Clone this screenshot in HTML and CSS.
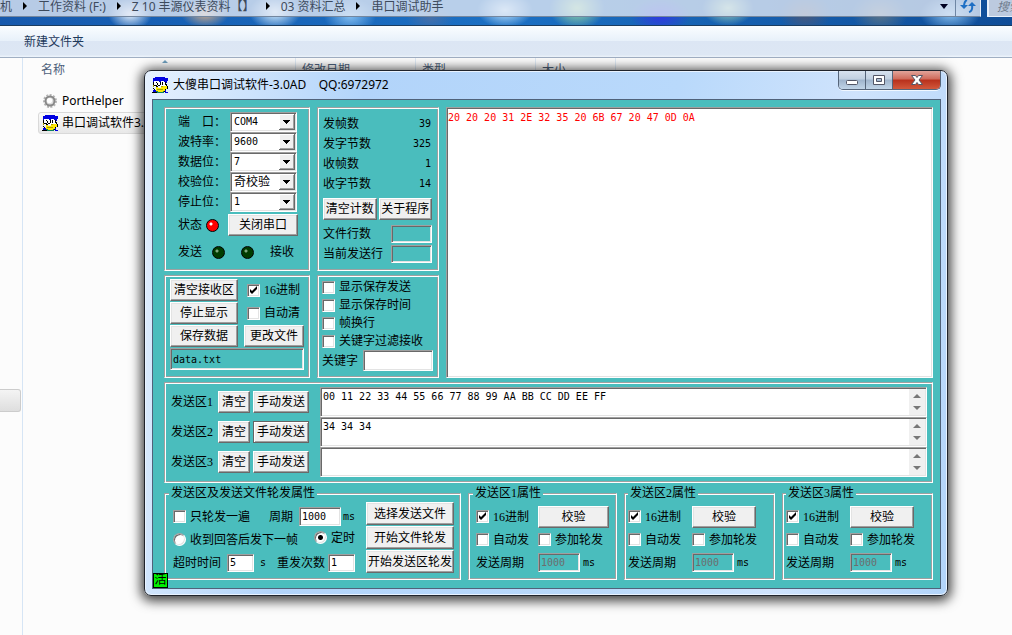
FILE: index.html
```html
<!DOCTYPE html>
<html lang="zh-CN">
<head>
<meta charset="utf-8">
<title>大傻串口调试软件</title>
<link rel="stylesheet" href="styles.css">
</head>
<body>
<svg class="defs" aria-hidden="true">
  <symbol id="clown" viewBox="0 0 16 16">
    <g shape-rendering="crispEdges">
    <path fill="#0000e0" d="M3 0h10v1h3v3h-1v2h-1v-1h-2v-1h-3v1h-2v-1h-5v1h-1v-4h2z"/>
    <path fill="#fff" d="M2 4h5v1h2v-1h3v1h2v5h-12z"/>
    <path fill="#000" d="M1 5h1v3h-1zM4 5h1v1h-1zM5 6h1v2h-1zM8 5h1v3h-1zM10 5h1v3h-1zM13 5h1v3h-1zM14 7h1v2h-1zM2 8h3v1h-3zM6 8h2v1h-2z"/>
    <path fill="#ffe800" d="M4 10h2v1h3v-1h2v-1h4v3h-2v2h-2v1h-5v-1h-2z"/>
    <path fill="#a8a000" d="M1 8h1v2h-1zM5 12h6v1h-6zM9 9h2v1h-2z"/>
    <path fill="#000" d="M1 11h1v1h1v1h1v1h-1v-1h-1v-1h-1zM4 9h2v1h-2zM15 9h1v3h-1zM13 12h1v1h-1zM0 15h5v1h-5zM12 14h1v1h-1z"/>
    <path fill="#0000e0" d="M1 13h3v2h-3zM13 13h1v2h2v1h-3z"/>
    <path fill="#108060" d="M4 14h2v1h5v-1h1v2h-7v-1h-1z"/>
    </g>
  </symbol>
  <symbol id="crumb" viewBox="0 0 4 8"><path d="M0 0l4 4-4 4z"/></symbol>
</svg>

<div class="explorer">
  <header class="address">
    <nav class="crumbs">
      <span>机</span><svg><use href="#crumb"/></svg>
      <span>工作资料 (F:)</span><svg><use href="#crumb"/></svg>
      <span>Z 10 丰源仪表资料【】</span><svg><use href="#crumb"/></svg>
      <span>03 资料汇总</span><svg><use href="#crumb"/></svg>
      <span>串口调试助手</span>
    </nav>
    <button class="history" aria-label="历史"><svg viewBox="0 0 8 5"><path fill="#002" d="M0 0h8l-4 5z"/></svg></button>
    <button class="refresh" aria-label="刷新"><svg viewBox="0 0 16 14"><path fill="none" stroke="#1f6fc4" stroke-width="2" d="M7 1Q4 2 4 8M9 13q4-1 3-7"/><path fill="#1f6fc4" d="M0 6h8l-4 4zM8 7h8l-4-4z"/></svg></button>
    <div class="search">搜索</div>
  </header>
  <div class="toolbar"><button>新建文件夹</button></div>
  <div class="body">
    <aside class="tree"><div class="thumb"></div></aside>
    <main class="files">
      <div class="columns"><span>名称<svg class="sort" viewBox="0 0 6 3"><path fill="#6f9fbe" d="M0 3l3-3 3 3z"/></svg></span><span>修改日期</span><span>类型</span><span>大小</span></div>
      <div class="file"><svg class="icon" viewBox="0 0 16 16"><circle cx="8" cy="8" r="6" fill="none" stroke="#b5b5b5" stroke-width="2" stroke-dasharray="2 1.400"/><circle cx="8" cy="8" r="4.500" fill="#ddd" stroke="#888" stroke-width="2"/><circle cx="7.500" cy="7.500" r="2.600" fill="#fff"/></svg>PortHelper</div>
      <div class="file selected"><svg class="icon"><use href="#clown"/></svg>串口调试软件3.</div>
    </main>
  </div>
</div>

<section class="window">
  <div class="titlebar">
    <svg class="icon"><use href="#clown"/></svg>
    <h1>大傻串口调试软件-3.0AD&nbsp;&nbsp;&nbsp; QQ:6972972</h1>
    <div class="controls">
      <button aria-label="最小化"><svg viewBox="0 0 14 12"><rect x="1.500" y="6.500" width="11" height="4" rx="1" fill="#fff" stroke="#535666"/></svg></button>
      <button aria-label="最大化"><svg viewBox="0 0 14 12"><path fill="#fff" stroke="#535666" fill-rule="evenodd" d="M1.500 1.500h11v9h-11zM4.500 4.500v3h5v-3z"/></svg></button>
      <button class="close" aria-label="关闭"><svg viewBox="0 0 14 12"><path fill="#fff" stroke="#535666" d="M1.500 1.500h4l1.500 2 1.500-2h4l-3.500 4.500 3.500 4.500h-4l-1.500-2-1.500 2h-4l3.500-4.500z"/></svg></button>
    </div>
  </div>

  <form class="client">
    <div class="upper">
      <div class="panel port">
        <div class="line"><label for="com">端<i></i>口：</label><span class="combo"><select id="com" class="mono"><option>COM4</option></select></span></div>
        <div class="line"><label for="baud">波特率：</label><span class="combo"><select id="baud" class="mono"><option>9600</option></select></span></div>
        <div class="line"><label for="bits">数据位：</label><span class="combo"><select id="bits" class="mono"><option>7</option></select></span></div>
        <div class="line"><label for="parity">校验位：</label><span class="combo"><select id="parity"><option>奇校验</option></select></span></div>
        <div class="line"><label for="stop">停止位：</label><span class="combo"><select id="stop" class="mono"><option>1</option></select></span></div>
        <div class="status"><span>状态</span><b class="led on"></b><button type="button">关闭串口</button></div>
        <div class="lamps"><span>发送</span><b class="led"></b><b class="led"></b><span>接收</span></div>
      </div>

      <div class="panel counts">
        <div class="count"><span>发帧数</span><output class="mono">39</output></div>
        <div class="count"><span>发字节数</span><output class="mono">325</output></div>
        <div class="count"><span>收帧数</span><output class="mono">1</output></div>
        <div class="count"><span>收字节数</span><output class="mono">14</output></div>
        <div class="pair"><button type="button">清空计数</button><button type="button">关于程序</button></div>
        <div class="count"><label for="lines">文件行数</label><input id="lines" class="teal" readonly></div>
        <div class="count"><label for="cur">当前发送行</label><input id="cur" class="teal" readonly></div>
      </div>

      <div class="panel receive">
        <button type="button">清空接收区</button><label class="tick"><input type="checkbox" checked>16进制</label>
        <button type="button">停止显示</button><label class="tick"><input type="checkbox">自动清</label>
        <button type="button">保存数据</button><button type="button">更改文件</button>
        <input class="teal mono wide" aria-label="文件名" value="data.txt" readonly>
      </div>

      <div class="panel display">
        <label class="tick"><input type="checkbox">显示保存发送</label>
        <label class="tick"><input type="checkbox">显示保存时间</label>
        <label class="tick"><input type="checkbox">帧换行</label>
        <label class="tick"><input type="checkbox">关键字过滤接收</label>
        <div class="keyword"><label for="key">关键字</label><input id="key"></div>
      </div>

      <textarea class="log mono" aria-label="接收区" readonly>20 20 20 31 2E 32 35 20 6B 67 20 47 0D 0A</textarea>
    </div>

    <div class="panel senders">
      <label for="s1">发送区1</label><button type="button">清空</button><button type="button">手动发送</button>
      <div class="memo"><textarea id="s1" class="mono">00 11 22 33 44 55 66 77 88 99 AA BB CC DD EE FF</textarea><svg viewBox="0 0 16 26"><path fill="#777" d="M4 9l4-4 4 4zM4 17h8l-4 4z"/></svg></div>
      <label for="s2">发送区2</label><button type="button">清空</button><button type="button" class="default">手动发送</button>
      <div class="memo"><textarea id="s2" class="mono">34 34 34</textarea><svg viewBox="0 0 16 26"><path fill="#777" d="M4 9l4-4 4 4zM4 17h8l-4 4z"/></svg></div>
      <label for="s3">发送区3</label><button type="button">清空</button><button type="button">手动发送</button>
      <div class="memo"><textarea id="s3" class="mono"></textarea><svg viewBox="0 0 16 26"><path fill="#777" d="M4 9l4-4 4 4zM4 17h8l-4 4z"/></svg></div>
    </div>

    <div class="lower">
      <fieldset class="cycle">
        <legend>发送区及发送文件轮发属性</legend>
        <div class="options">
          <div class="row first"><label class="tick"><input type="checkbox">只轮发一遍</label><label class="value">周期 <input class="mono medium" value="1000"><span class="mono">ms</span></label></div>
          <div class="row second"><label class="tick"><input type="radio" name="mode">收到回答后发下一帧</label><label class="tick"><input type="radio" name="mode" checked>定时</label></div>
          <div class="row third"><label class="value">超时时间<input class="mono short" value="5"><span class="mono">s</span></label><label class="value tight">重发次数<input class="mono short" value="1"></label></div>
        </div>
        <div class="stack"><button type="button">选择发送文件</button><button type="button">开始文件轮发</button><button type="button">开始发送区轮发</button></div>
      </fieldset>
      <fieldset class="zone roomy">
        <legend>发送区1属性</legend>
        <label class="tick"><input type="checkbox" checked>16进制</label><button type="button">校验</button>
        <label class="tick"><input type="checkbox">自动发</label><label class="tick"><input type="checkbox">参加轮发</label>
        <label for="z1">发送周期</label><span class="value"><input id="z1" class="mono medium" value="1000" disabled><span class="mono">ms</span></span>
      </fieldset>
      <fieldset class="zone">
        <legend>发送区2属性</legend>
        <label class="tick"><input type="checkbox" checked>16进制</label><button type="button">校验</button>
        <label class="tick"><input type="checkbox">自动发</label><label class="tick"><input type="checkbox">参加轮发</label>
        <label for="z2">发送周期</label><span class="value"><input id="z2" class="mono medium" value="1000" disabled><span class="mono">ms</span></span>
      </fieldset>
      <fieldset class="zone">
        <legend>发送区3属性</legend>
        <label class="tick"><input type="checkbox" checked>16进制</label><button type="button">校验</button>
        <label class="tick"><input type="checkbox">自动发</label><label class="tick"><input type="checkbox">参加轮发</label>
        <label for="z3">发送周期</label><span class="value"><input id="z3" class="mono medium" value="1000" disabled><span class="mono">ms</span></span>
      </fieldset>
    </div>
    <span class="badge">活</span>
  </form>
</section>
</body>
</html>
```
FILE: styles.css
```css
* { box-sizing: border-box; }
body {
  margin: 0;
  height: 100vh;
  overflow: hidden;
  background: #fcfcfc;
  color: #000;
  font: 12px/16px "Noto Sans", "Noto Sans CJK SC", sans-serif;
}
button, input, select, textarea { font: inherit; color: inherit; margin: 0; }
.defs { position: absolute; width: 0; height: 0; }
.icon { width: 16px; height: 16px; flex: none; }

/* Explorer behind the tool window */
.explorer { display: flex; flex-direction: column; height: 100vh; }
.address {
  display: flex;
  height: 26px;
  flex: none;
  padding-bottom: 8px;
  border-bottom: 1px solid #1a3c60;
  background:
    radial-gradient(ellipse 22px 16px at 130px 14px, #e8f2fc, transparent),
    radial-gradient(ellipse 24px 14px at 205px 14px, #c9a98c, transparent),
    radial-gradient(ellipse 26px 18px at 275px 12px, #dff2ff, transparent),
    radial-gradient(ellipse 26px 18px at 350px 16px, #82bdf0, transparent),
    radial-gradient(ellipse 24px 14px at 430px 18px, #466fa8, transparent),
    radial-gradient(ellipse 28px 18px at 505px 10px, #c8e8ff, transparent),
    radial-gradient(ellipse 28px 22px at 577px 8px, #a5e0a0, transparent),
    radial-gradient(ellipse 30px 18px at 660px 16px, #3038e0, transparent),
    radial-gradient(ellipse 26px 18px at 728px 8px, #a8d8b8, transparent),
    radial-gradient(ellipse 26px 20px at 805px 14px, #4b5878, transparent),
    radial-gradient(ellipse 28px 20px at 880px 14px, #5b7488, transparent),
    radial-gradient(ellipse 30px 18px at 950px 14px, #86bdec, transparent),
    linear-gradient(90deg, #1659ad, #1b70c4 50%, #0f4d98);
}
.crumbs {
  flex: 1;
  display: flex;
  align-items: flex-start;
  gap: 11px;
  min-width: 0;
  white-space: nowrap;
  color: #3d4a5c;
  background: rgba(224, 231, 244, 0.8);
  border-bottom: 1px solid #74879f;
  line-height: 13px;
}
.crumbs svg { width: 4px; height: 8px; margin-top: 2px; flex: none; }
.address button {
  border: 0;
  border-bottom: 1px solid #74879f;
  padding: 0;
  display: flex;
  align-items: center;
  justify-content: center;
  background: rgba(224, 231, 244, 0.8);
}
.address .history { width: 22px; padding-bottom: 4px; }
.history svg { width: 8px; height: 5px; }
.address .refresh { width: 26px; border-left: 1px solid #6f86a4; border-right: 1px solid #e8f0fa; padding-bottom: 4px; }
.refresh svg { width: 16px; height: 14px; }
.search {
  width: 25px;
  margin-left: 6px;
  padding-left: 8px;
  overflow: hidden;
  white-space: nowrap;
  font-style: italic;
  color: #707d8e;
  background: #bccadf;
  border-left: 2px solid #e8f0fa;
  border-bottom: 1px solid #e8f0fa;
  line-height: 14px;
}
.toolbar {
  flex: none;
  display: flex;
  align-items: center;
  height: 32px;
  padding-left: 24px;
  background: linear-gradient(#fafdff, #e8f1fa 47%, #dce6f4 48%, #dde7f4 92%, #eef5fc);
  border-bottom: 1px solid #a0afc3;
}
.toolbar button { border: 0; padding: 0; background: none; color: #1e395b; }
.body { flex: 1; display: flex; min-height: 0; }
.tree { width: 23px; border-right: 1px solid #d6e5f5; padding-top: 331px; }
.thumb { height: 23px; width: 21px; border: 1px solid #ccc; border-left: 0; border-radius: 0 3px 3px 0; background: linear-gradient(#f4f4f4, #dedede); }
.files { flex: 1; padding-left: 15px; }
.columns { display: flex; height: 32px; color: #4c607a; line-height: 24px; }
.columns span { width: 120px; padding-left: 6px; border-right: 1px solid #dfeaf5; height: 24px; }
.columns span:first-child { display: flex; width: 258px; padding-left: 3px; }
.columns span:last-child { width: 80px; }
.sort { width: 6px; height: 3px; margin-left: 97px; margin-top: 2px; }
.file { display: flex; align-items: center; gap: 4px; height: 22px; width: 240px; padding-left: 3px; border: 1px solid transparent; border-radius: 3px; }
.selected { background: linear-gradient(#fafafa, #e8e8e8); border-color: #d9d9d9; }

/* Tool window */
.window {
  position: absolute;
  left: 144px;
  right: 64px;
  top: 70px;
  padding: 0 6px 6px 7px;
  border: 1px solid #20242c;
  border-radius: 7px;
  background: linear-gradient(100deg, #e6f1fe, #b2d4fa 25%, #b9d9fb 60%, #cfe3fc 80%, #b2d4fa);
  box-shadow: inset 0 0 0 1px #e9f3ff, 0 2px 12px 3px rgba(0, 0, 0, 0.75);
}
.titlebar { display: flex; align-items: center; height: 28px; }
.titlebar h1 { flex: 1; margin: 0 0 0 5px; font-size: 12px; font-weight: 400; white-space: nowrap; }
.controls { display: flex; align-self: flex-start; height: 19px; border: 1px solid #56657a; border-top: 0; border-radius: 0 0 5px 5px; overflow: hidden; box-shadow: 0 1px #f0f7ff; }
.controls button {
  width: 27px;
  padding: 0;
  border: 0;
  border-right: 1px solid #56657a;
  background: linear-gradient(#d7e2ef, #c0cfe0 45%, #9fb4cc 50%, #c1d4e7);
  display: flex;
  align-items: center;
  justify-content: center;
}
.controls svg { width: 14px; height: 12px; }
.controls .close { width: 47px; border: 0; background: linear-gradient(#e2a49a, #cf6a5a 45%, #b8301c 50%, #d2593c); }

.client {
  position: relative;
  padding: 7px 7px 8px 11px;
  border: 1px solid #50627a;
  background: #4abdbd;
  font-family: "Liberation Serif", "Noto Sans CJK SC", serif;
  white-space: nowrap;
}
.mono { font-family: "DejaVu Sans Mono", monospace; font-size: 10px; }
.panel, fieldset {
  margin: 0;
  min-width: 0;
  border: 1px solid;
  border-color: #a0a0a0 #fff #fff #a0a0a0;
  box-shadow: inset 1px 1px #fff, inset -1px -1px #a0a0a0;
}
.client button {
  height: 22px;
  padding: 0;
  border: 1px solid;
  border-color: #fff #696969 #696969 #fff;
  background: #f0f0f0;
  box-shadow: inset -1px -1px #a0a0a0, inset 1px 1px #e3e3e3;
  line-height: 18px;
}
.client .default { border-color: #646464; box-shadow: inset 1px 1px #fff, inset -1px -1px #a0a0a0; }
.client input, .combo, .memo, .log {
  border: 1px solid;
  border-color: #a0a0a0 #fff #fff #a0a0a0;
  box-shadow: inset 1px 1px #696969, inset -1px -1px #e3e3e3;
  background-color: #fff;
  border-radius: 0;
}
.client input { padding: 0 2px; min-width: 0; }
.client .teal, .client input:disabled { background-color: #4abdbd; }
.client input:disabled { color: #6d6d6d; }
.client [type="checkbox"], .client [type="radio"] { appearance: none; width: 13px; height: 13px; padding: 0; flex: none; }
.client [type="radio"] { border-radius: 50%; }
.client [type="checkbox"]:checked { background: url("data:image/svg+xml,%3Csvg xmlns='http://www.w3.org/2000/svg' viewBox='0 0 11 11'%3E%3Cpath d='M2 4v3l2 2 5-5V1L4 6z'/%3E%3C/svg%3E") center / 11px 11px no-repeat #fff; }
.client [type="radio"]:checked { background: radial-gradient(circle, #000 2px, #fff 3px); }
.tick { display: flex; align-items: center; gap: 4px; }
.value { display: flex; align-items: center; gap: 3px; }

.upper {
  display: grid;
  grid-template: 164px 103px / 146px 122px 1fr;
  gap: 4px 7px;
}
.port { grid-area: 1 / 1; padding: 4px 11px 0 13px; }
.line { display: flex; align-items: center; height: 20px; }
.line label { flex: none; width: 52px; overflow: visible; }
.line i { display: inline-block; width: 12px; }
.combo { width: 67px; height: 20px; padding: 1px; }
.combo select {
  display: block;
  appearance: none;
  width: 100%;
  height: 16px;
  padding: 0 2px;
  border: 0;
  border-radius: 0;
  background: url("data:image/svg+xml,%3Csvg xmlns='http://www.w3.org/2000/svg' viewBox='0 0 16 16' shape-rendering='crispEdges'%3E%3Cpath fill='%23696969' d='M0 0h16v16H0z'/%3E%3Cpath fill='%23fff' d='M0 0h15v15H0z'/%3E%3Cpath fill='%23a0a0a0' d='M1 1h14v14H1z'/%3E%3Cpath fill='%23f0f0f0' d='M1 1h13v13H1z'/%3E%3Cpath d='M4 6h7v1h-1v1H9v1H8v1H7V9H6V8H5V7H4z'/%3E%3C/svg%3E") right center / 16px 16px no-repeat #fff;
}
.status { display: flex; align-items: center; gap: 4px; margin-top: 2px; }
.status button { width: 70px; margin-left: 5px; }
.led { width: 13px; height: 13px; flex: none; border: 1px solid #000; border-radius: 50%; background: radial-gradient(circle at 4px 4px, #7fa87f 1px, #003c00 2px); }
.led.on { background: radial-gradient(circle at 4px 4px, #fff 1px, #f00 2px); }
.lamps { display: flex; align-items: center; height: 24px; margin-top: 4px; gap: 16px; }
.lamps span:first-child { margin-right: -6px; }

.counts { grid-area: 1 / 2; padding: 6px 6px 0 5px; }
.count { display: flex; align-items: center; justify-content: space-between; height: 20px; }
.count output { padding-right: 1px; }
.count input { width: 41px; height: 18px; }
.pair { display: grid; grid-template-columns: 1fr 1fr; gap: 2px; margin: 4px 0 4px; }

.receive {
  grid-area: 2 / 1;
  display: grid;
  grid-template-columns: 68px 60px;
  grid-auto-rows: 22px;
  gap: 1px 6px;
  padding: 3px 5px;
}
.receive .tick { padding-left: 3px; }
.wide { grid-column: 1 / -1; height: 22px; }
.display { grid-area: 2 / 2; padding: 2px 5px 1px 4px; }
.display .tick { height: 18px; }
.keyword { display: flex; align-items: center; gap: 5px; }
.keyword input { flex: 1; height: 21px; }
.log { grid-area: 1 / 3 / 3 / 4; width: 100%; resize: none; padding: 2px 1px; color: #f00; outline: 0; }

.senders {
  display: grid;
  grid-template-columns: 44px 32px 56px 1fr;
  align-items: center;
  column-gap: 3px;
  margin-top: 4px;
  padding: 4px 5px 5px 6px;
}
.memo { display: flex; height: 30px; margin-left: 8px; padding: 1px; }
.memo textarea { flex: 1; height: 100%; border: 0; padding: 0 1px; resize: none; background: none; overflow: hidden; outline: 0; }
.memo svg { width: 16px; height: 26px; background: #f0f0f0; }

.lower { display: grid; grid-template-columns: 297fr 149fr 151fr 151fr; gap: 7px; margin-top: 3px; }
legend { height: 14px; line-height: 14px; padding: 0 2px; background: #4abdbd; }
.cycle { display: flex; justify-content: space-between; padding: 2px 6px 5px 8px; }
.cycle legend { margin-left: -4px; }
.options { padding-top: 3px; width: 182px; }
.row { display: flex; align-items: center; justify-content: space-between; height: 23px; }
.first .value { gap: 2px; }
.first .mono.medium { margin-left: 4px; }
.second .tick:last-child { padding-bottom: 4px; }
.third .value { gap: 6px; }
.third .tight { gap: 3px; }
.medium { width: 42px; height: 19px; }
.short { width: 27px; height: 18px; }
.stack { display: grid; grid-template-columns: 88px; grid-auto-rows: 23px; gap: 1px; }
.stack button { height: 23px; }
.zone { display: grid; grid-template-columns: 64px 64px; grid-auto-rows: 23px; align-items: center; padding: 5px 1px 5px 3px; }
.roomy { grid-template-columns: 62px 71px; padding-left: 7px; }
.roomy legend { margin-left: -3px; }

.badge {
  position: absolute;
  left: 0;
  bottom: 0;
  width: 15px;
  height: 15px;
  border: 1px solid #000;
  background: #00f000;
  line-height: 13px;
  text-align: center;
}
```
